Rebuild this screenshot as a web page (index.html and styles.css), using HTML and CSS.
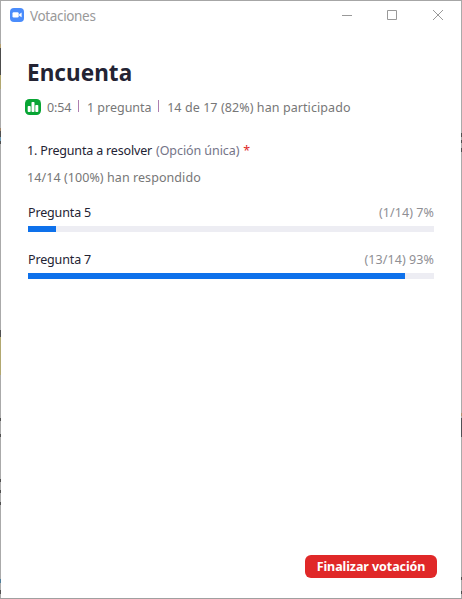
FILE: index.html
```html
<!DOCTYPE html>
<html lang="es">
<head>
<meta charset="utf-8">
<title>Votaciones</title>
<link rel="stylesheet" href="styles.css">
</head>
<body>
<div class="window">
  <header class="titlebar">
    <svg class="app-icon" width="14" height="14" viewBox="0 0 14 14"><rect width="14" height="14" rx="4" fill="#4a8cfb"/><rect x="2.5" y="4.3" width="6.2" height="5.2" rx="1.2" fill="#fff"/><path d="M9.2 6.2 11.6 4.6V9.3L9.2 7.7Z" fill="#fff"/></svg>
    <span class="app-name">Votaciones</span>
    <svg class="control" width="10" height="10" viewBox="0 0 10 10"><path d="M0 5.5H10"/></svg>
    <svg class="control" width="10" height="10" viewBox="0 0 10 10"><path d="M.5.5H9.5V9.5H.5Z"/></svg>
    <svg class="control close" width="10" height="10" viewBox="0 0 10 10"><path d="M0 0 10 10M10 0 0 10"/></svg>
  </header>
  <main class="content">
    <h1>Encuenta</h1>
    <div class="summary">
      <svg width="16" height="16" viewBox="0 0 16 16"><rect width="16" height="16" rx="4.5" fill="#08a534"/><rect x="2.7" y="7" width="3" height="6" rx=".8" fill="#fff"/><rect x="6.5" y="3" width="3" height="10" rx=".8" fill="#fff"/><rect x="10.3" y="6" width="3" height="7" rx=".8" fill="#fff"/></svg>
      <span class="time">0:54</span><i class="divider"></i>
      <span class="count">1 pregunta</span><i class="divider"></i>
      <span class="joined">14 de 17 (82%) han participado</span>
    </div>
    <p class="question"><span class="q-title">1. Pregunta a resolver</span><span class="q-type">(Opción única)</span><span class="required">*</span></p>
    <p class="answered"><span>14/14 (100%) han respondido</span></p>
    <section class="option">
      <div class="option-label"><span class="name">Pregunta 5</span><span class="result">(1/14) 7%</span></div>
      <div class="bar"><div class="fill" style="width:7%"></div></div>
    </section>
    <section class="option">
      <div class="option-label"><span class="name">Pregunta 7</span><span class="result">(13/14) 93%</span></div>
      <div class="bar"><div class="fill" style="width:92.86%"></div></div>
    </section>
  </main>
  <footer><button>Finalizar votación</button></footer>
</div>
</body>
</html>
```
FILE: styles.css
```css
* { box-sizing: border-box; }
body { margin: 0; font-family: "Noto Sans", "Open Sans", sans-serif; font-size: 12.5px; color: #232333; }
h1, p { margin: 0; }
span { white-space: nowrap; }
.window {
  width: 462px; height: 599px; padding: 1px;
  display: flex; flex-direction: column;
  background:
    linear-gradient(#a6a6a6, #a6a6a6) top / 100% 1px no-repeat,
    linear-gradient(#a0a0a0, #a0a0a0) bottom / 100% 1px no-repeat,
    linear-gradient(#aaa 0 44px, #b5a070 44px 48px, #4c4c4c 48px 75px, #b2a870 75px 89px, #aaa 89px 128px, #a08468 128px 131px, #505050 131px 137px, #6c9ab4 137px 141px, #505050 141px 144px, #aaa 144px 330px, #505050 330px 337px, #b2a870 337px 375px, #aaa 375px 418px, #505050 418px 421px, #aaa 421px 434px, #505050 434px 437px, #aaa 437px 479px, #505050 479px 482px, #aaa 482px 490px, #505050 490px 493px, #aaa 493px 502px, #505050 502px 505px, #aaa 505px 579px, #4f7f9c 579px 583px, #aaa 583px 590px, #505050 590px 594px, #aaa 594px) left / 1px 100% no-repeat,
    linear-gradient(#aaa 0 133px, #505050 133px 137px, #aaa 137px 140px, #505050 140px 143px, #aaa 143px 148px, #505050 148px 152px, #aaa 152px 413px, #b09070 413px 416px, #aaa 416px 418px, #505055 418px 437px, #aaa 437px 577px, #505050 577px 580px, #aaa 580px 591px, #505050 591px 594px, #aaa 594px) right / 1px 100% no-repeat,
    #fff;
}
.titlebar { height: 28px; display: flex; align-items: center; padding: 0 18px 0 9px; color: #999; }
.app-name { margin: 1px auto 0 6px; font-size: 13.5px; letter-spacing: -.35px; }
.control { fill: none; stroke: #999; margin-left: 35px; }
.close { margin-left: 36px; }
.content { flex: 1; padding: 0 27px; }
h1 { height: 33px; margin: 27px 0 10px -1px; font-size: 22.5px; line-height: 33px; letter-spacing: .05px; }
.summary { display: flex; align-items: center; height: 16px; margin-left: -3px; color: #777; }
.time { margin-left: 6px; letter-spacing: -.1px; }
.count { letter-spacing: 0; }
.joined { letter-spacing: .08px; }
.divider { width: 1px; height: 12px; margin: -2px 8px 0 6.5px; background: #ad7fb0; }
.question { display: flex; height: 18px; line-height: 18px; margin: 27px 0 0 -1px; }
.q-title { letter-spacing: -.17px; }
.q-type { margin-left: 4px; letter-spacing: -.08px; color: #747487; }
.required { margin-left: 4px; color: #e02828; }
.answered { height: 18px; line-height: 18px; margin: 9px 0 17px -1px; letter-spacing: .07px; color: #777; }
.option { height: 28px; margin-bottom: 19px; }
.option-label { display: flex; justify-content: space-between; height: 18px; line-height: 18px; margin-bottom: 4px; }
.name { letter-spacing: -.15px; }
.result { letter-spacing: .08px; color: #8f8f94; }
.bar { height: 6px; background: #ededf3; }
.fill { height: 6px; background: #0e71eb; }
footer { display: flex; justify-content: flex-end; padding: 0 24px 20px; }
button { width: 132px; height: 23px; padding: 0; border: 0; border-radius: 6px; background: #e02828; color: #fff; font: bold 12.5px/23px "Noto Sans", sans-serif; letter-spacing: -.08px; white-space: nowrap; }
```
